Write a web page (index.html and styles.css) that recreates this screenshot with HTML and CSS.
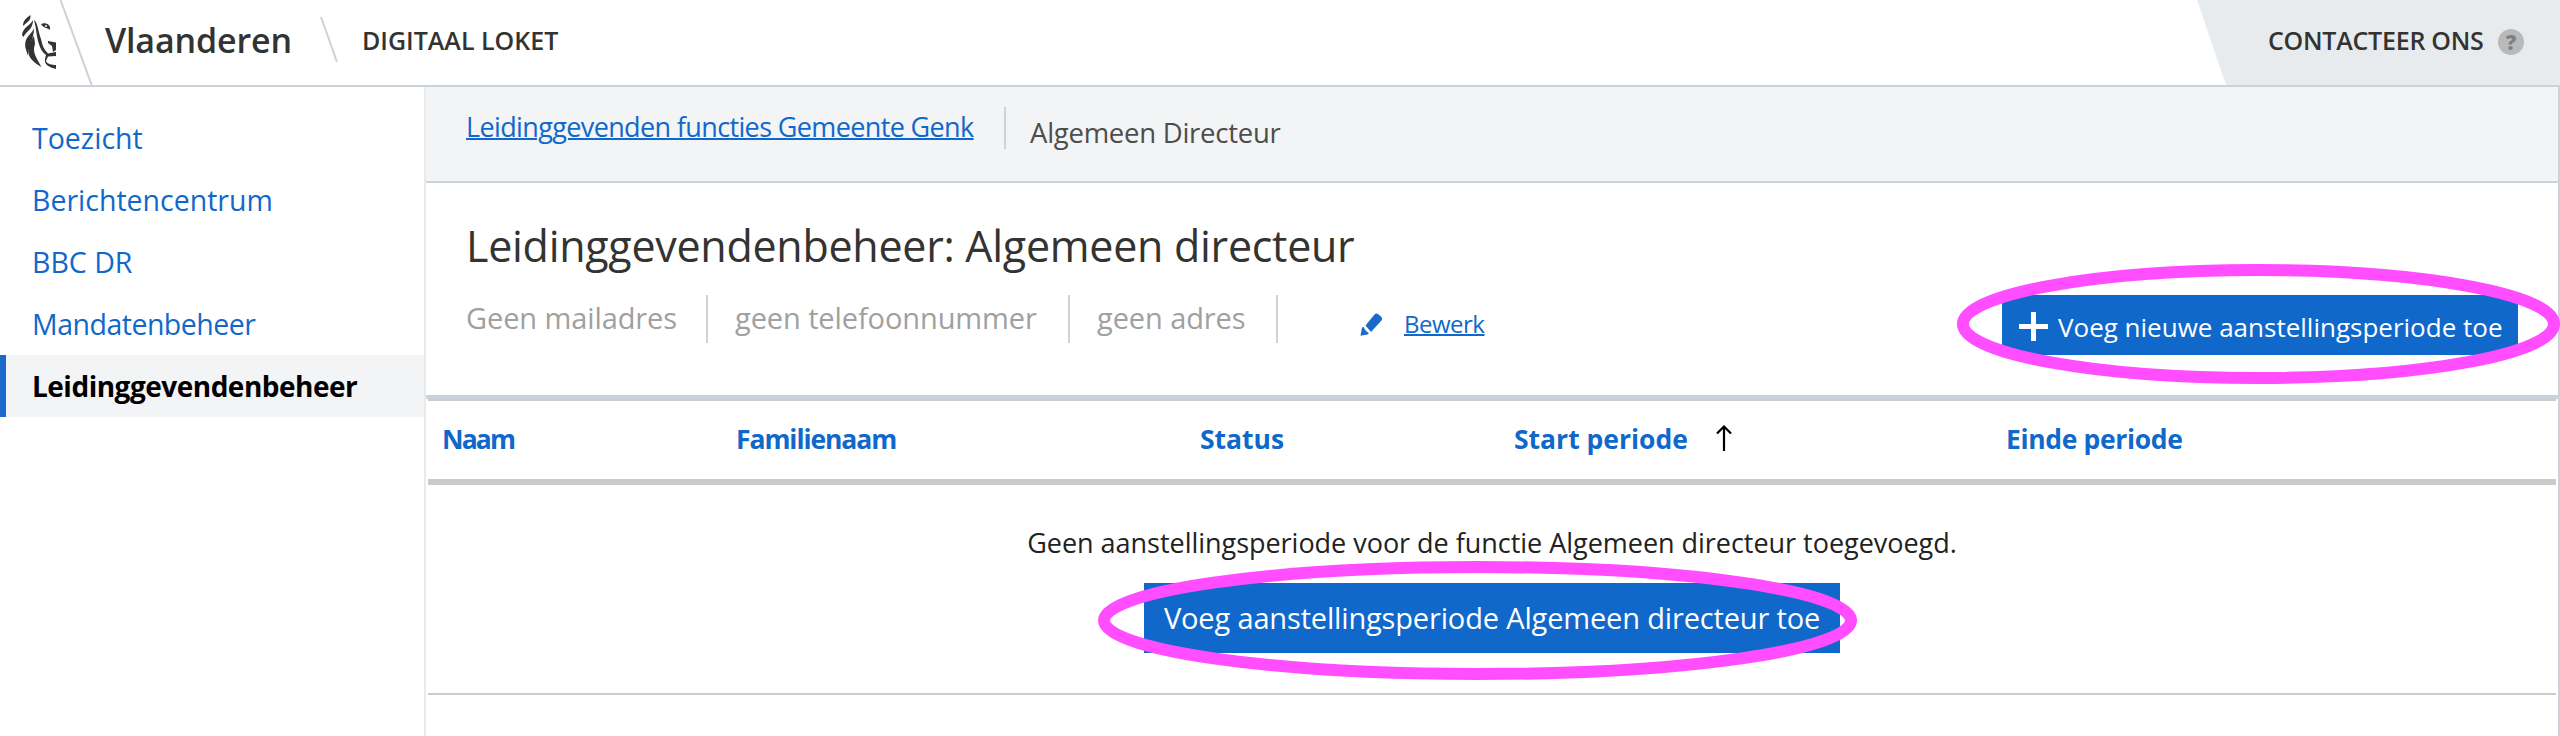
FILE: index.html
```html
<!DOCTYPE html>
<html lang="nl">
<head>
<meta charset="utf-8">
<title>Digitaal Loket</title>
<link rel="stylesheet" href="styles.css">
</head>
<body>
<header class="header">
  <svg class="logo" width="94" height="85" viewBox="0 0 94 85">
    <g fill="#333332">
      <path d="M30.500 15C26 18 23 21 23 26C27 22 31 21 30.500 15Z"/>
      <path d="M33 20C30 26 23 27 22 35L23.500 37C26 31 33 30 33 20Z"/>
      <path d="M34 28C31 36 24 36 25.500 48L28 56C28 46 34 40 34 28Z"/>
      <path d="M34 36C28 45 26 54 32 60C35 63 38 65 41.500 67C36 57 32 52 35 44Z"/>
      <path d="M34 20C38 23 38 31 41 39C42 45 44 50 48 53.500L56 52V56L48 56.500L46 61C47 64 52 65 56 65V69C49 67 44 65 45 59L46 55C42 52 40 48 38 41C36 33 36 26 34 20Z"/>
      <path d="M48 41L56 42.500V50L53 52L52 46L48 43Z"/>
      <path d="M41 24C45 22 49 24 50 27V30C48 28 43 28 41 24Z"/>
    </g>
    <circle cx="46" cy="26" r="1" fill="#fff"/>
    <path d="M60.500 0L92 86" fill="none" stroke="#cbd2da" stroke-width="2"/>
  </svg>
  <span class="brand">Vlaanderen</span>
  <svg class="slash" width="18" height="45" viewBox="0 0 18 45"><path d="M1 0L17 45" stroke="#cbd2da" stroke-width="2"/></svg>
  <span class="app">DIGITAAL LOKET</span>
  <div class="contact">
    <span class="contact-text">CONTACTEER ONS</span>
    <span class="help">?</span>
  </div>
</header>
<div class="body">
  <nav class="side">
    <a class="nav">Toezicht</a>
    <a class="nav">Berichtencentrum</a>
    <a class="nav">BBC DR</a>
    <a class="nav snug">Mandatenbeheer</a>
    <a class="nav active">Leidinggevendenbeheer</a>
  </nav>
  <main class="main">
    <div class="crumbs">
      <a class="crumb-link">Leidinggevenden functies Gemeente Genk</a>
      <span class="crumb">Algemeen Directeur</span>
    </div>
    <section class="intro">
      <h1 class="title">Leidinggevendenbeheer: Algemeen directeur</h1>
      <div class="details">
        <span class="detail detail-mail">Geen mailadres</span>
        <span class="detail detail-phone">geen telefoonnummer</span>
        <span class="detail detail-address">geen adres</span>
        <svg class="pencil" width="23" height="23" viewBox="0 0 23 23" fill="#1a6acb"><path d="M14.500 1.500Q16.500 -0.500 18.500 1.500L21 3.500Q23 5.500 21.500 7.500L11 19L5.500 12.500Z"/><path d="M3.800 14Q5 18 9 20L7.500 21.500L0.500 22.800L2 14.500Z"/></svg>
        <a class="edit">Bewerk</a>
        <button class="btn add"><svg width="29" height="29" viewBox="0 0 29 29"><path d="M14.500 0V29M0 14.500H29" stroke="#fff" stroke-width="5"/></svg>Voeg nieuwe aanstellingsperiode toe</button>
      </div>
    </section>
    <section class="table">
      <div class="thead">
        <span class="th th-name">Naam</span>
        <span class="th th-family">Familienaam</span>
        <span class="th">Status</span>
        <span class="th">Start periode<svg class="arrow" width="16" height="26" viewBox="0 0 16 26"><path d="M8 26V1.500M1 8.500L8 1.500L15 8.500" fill="none" stroke="#000" stroke-width="2.200"/></svg></span>
        <span class="th th-end">Einde periode</span>
      </div>
      <div class="empty">
        <p class="msg">Geen aanstellingsperiode voor de functie Algemeen directeur toegevoegd.</p>
        <button class="btn create">Voeg aanstellingsperiode Algemeen directeur toe</button>
      </div>
    </section>
  </main>
</div>
<svg class="mark mark-add" width="603" height="120"><ellipse cx="301.500" cy="60" rx="295.500" ry="54" fill="none" stroke="#ff4dff" stroke-width="12"/></svg>
<svg class="mark mark-create" width="759" height="119"><ellipse cx="379.500" cy="59.500" rx="373.500" ry="53.500" fill="none" stroke="#ff4dff" stroke-width="12"/></svg>
</body>
</html>
```
FILE: styles.css
```css
* { box-sizing: border-box; }
body { margin: 0; width: 2560px; height: 736px; overflow: hidden; position: relative; background: #fff; color: #333332; font-family: "Open Sans", "Noto Sans", sans-serif; }
.header { display: flex; height: 87px; border-bottom: 2px solid #cbd2da; line-height: 80px; white-space: nowrap; }
.logo { flex: none; margin-right: 11px; }
.brand { font-size: 34px; font-weight: 600; letter-spacing: -0.150px; width: 215px; flex: none; }
.slash { margin-top: 17px; margin-right: 24px; flex: none; }
.app { font-size: 25px; font-weight: 600; }
.contact { margin-left: auto; width: 363px; height: 85px; padding-left: 71px; display: flex; background: #e8ebee; clip-path: polygon(0 0, 100% 0, 100% 100%, 29px 100%); }
.contact-text { width: 230px; font-size: 25px; font-weight: 600; letter-spacing: -0.250px; }
.help { width: 26px; height: 26px; margin-top: 29px; border-radius: 50%; background: #b8b9ba; color: #7f8082; font-size: 21px; font-weight: 800; line-height: 26px; text-align: center; }
.body { display: flex; height: 649px; }
.side { width: 426px; flex: none; padding-top: 20px; border-right: 2px solid #e8ebee; }
.nav { display: block; height: 62px; line-height: 62px; padding-left: 32px; font-size: 28.500px; color: #1068cb; }
.snug { letter-spacing: -0.500px; }
.active { padding-left: 26px; border-left: 6px solid #1a6acb; background: #f3f4f6; color: #000; font-size: 28px; font-weight: 700; letter-spacing: -0.500px; }
.main { flex: 1; border-right: 2px solid #cbd2d9; white-space: nowrap; }
.crumbs { display: flex; height: 96px; padding: 20px 0 0 40px; background: #f3f4f6; border-bottom: 2px solid #cbd2da; }
.crumb-link { width: 538px; font-size: 27px; line-height: 40px; letter-spacing: -0.630px; color: #1068cb; text-decoration: underline; text-decoration-thickness: 2px; }
.crumb { height: 42px; font-size: 27.500px; line-height: 51px; letter-spacing: -0.260px; padding-left: 24px; border-left: 2px solid #cbd2da; color: #4d4d4b; }
.intro { height: 212px; padding: 32px 40px 0; }
.title { margin: 0 0 20px; font-size: 43px; line-height: 61px; height: 60px; font-weight: 400; letter-spacing: -0.280px; }
.details { display: flex; }
.detail { height: 48px; margin-right: 27px; line-height: 45px; font-size: 29px; letter-spacing: -0.100px; color: #a0a0a0; border-right: 2px solid #cbd2da; }
.detail-mail { width: 242px; }
.detail-phone { width: 335px; }
.detail-address { width: 181px; }
.pencil { margin: 18px 21px 0 55px; }
.edit { font-size: 24px; line-height: 58px; letter-spacing: -0.500px; color: #1068cb; text-decoration: underline; text-decoration-thickness: 2px; }
.btn { border: 0; border-radius: 0; padding: 0; background: #1068cb; color: #fff; font-family: inherit; white-space: nowrap; }
.add { display: flex; width: 516px; height: 60px; margin-left: auto; padding-left: 17px; font-size: 26px; line-height: 64px; }
.add svg { margin: 17px 10px 0 0; }
.table { border-top: 4px solid #cbd2d9; }
.thead { display: grid; grid-template-columns: 294px 464px 314px 492px 1fr; height: 86px; margin: 0 2px; border-top: 2px solid #ccc; border-bottom: 6px solid #cacaca; font-size: 26.500px; font-weight: 700; line-height: 76px; color: #1068cb; }
.th { display: flex; padding-left: 14px; }
.th-name { letter-spacing: -1.870px; }
.th-family { letter-spacing: -1.070px; }
.th-end { letter-spacing: -0.350px; }
.arrow { margin: 24px 0 0 28px; }
.empty { display: flex; flex-direction: column; align-items: center; margin: 0 2px; height: 210px; padding-top: 37px; border-bottom: 2px solid #ccc; }
.msg { margin: 0 0 20px; font-size: 27px; line-height: 41px; letter-spacing: -0.030px; color: #222; }
.create { width: 696px; height: 70px; font-size: 29px; line-height: 70px; letter-spacing: -0.160px; }
.mark { position: absolute; }
.mark-add { left: 1957px; top: 264px; }
.mark-create { left: 1098px; top: 561px; }
```
